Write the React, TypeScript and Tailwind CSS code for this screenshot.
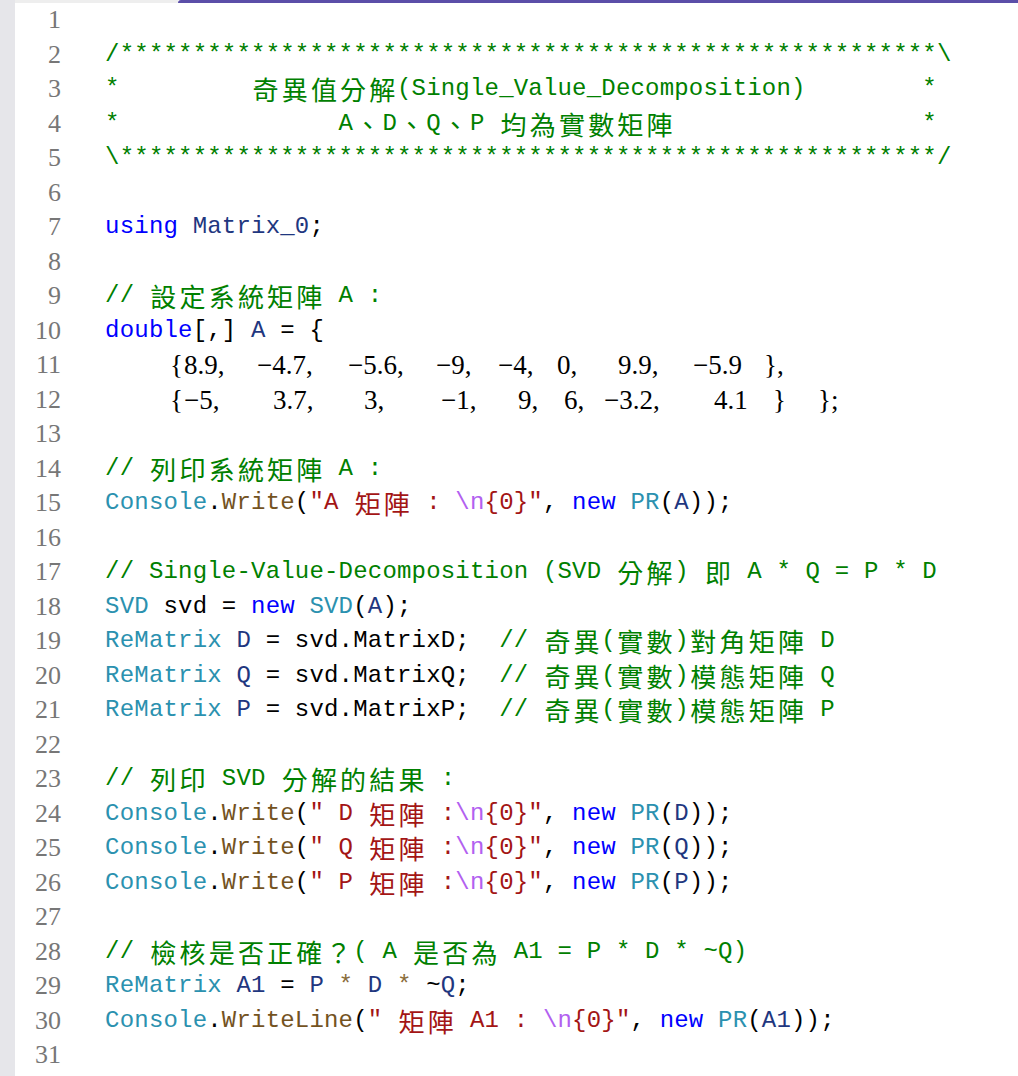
import React from "react";

type Tok = [string, string];
const G = "text-[#008000]";
const K = "text-[#0000ff]";
const T = "text-[#2b91af]";
const M = "text-[#74531f]";
const S = "text-[#a31515]";
const E = "text-[#b260f0]";
const N = "text-[#1f377f]";
const P = "text-[#000000]";
const O = "text-[#8a6d3b]";

const star56 = "*".repeat(56);
const sp = (n: number) => " ".repeat(n);

const lines: (Tok[] | "L11" | "L12")[] = [
  [],
  [[G, "/" + star56 + "\\"]],
  [[G, "*" + sp(9) + "奇異值分解(Single_Value_Decomposition)" + sp(8) + "*"]],
  [[G, "*" + sp(15) + "A、D、Q、P 均為實數矩陣" + sp(17) + "*"]],
  [[G, "\\" + star56 + "/"]],
  [],
  [[K, "using"], [P, " "], [N, "Matrix_0"], [P, ";"]],
  [],
  [[G, "// 設定系統矩陣 A :"]],
  [[K, "double"], [P, "[,] "], [N, "A"], [P, " = {"]],
  "L11",
  "L12",
  [],
  [[G, "// 列印系統矩陣 A :"]],
  [[T, "Console"], [P, "."], [M, "Write"], [P, "("], [S, '"A 矩陣 : '], [E, "\\n"], [S, '{0}"'], [P, ", "], [K, "new"], [P, " "], [T, "PR"], [P, "("], [N, "A"], [P, "));"]],
  [],
  [[G, "// Single-Value-Decomposition (SVD 分解) 即 A * Q = P * D"]],
  [[T, "SVD"], [P, " svd = "], [K, "new"], [P, " "], [T, "SVD"], [P, "("], [N, "A"], [P, ");"]],
  [[T, "ReMatrix"], [P, " "], [N, "D"], [P, " = svd.MatrixD;  "], [G, "// 奇異(實數)對角矩陣 D"]],
  [[T, "ReMatrix"], [P, " "], [N, "Q"], [P, " = svd.MatrixQ;  "], [G, "// 奇異(實數)模態矩陣 Q"]],
  [[T, "ReMatrix"], [P, " "], [N, "P"], [P, " = svd.MatrixP;  "], [G, "// 奇異(實數)模態矩陣 P"]],
  [],
  [[G, "// 列印 SVD 分解的結果 :"]],
  [[T, "Console"], [P, "."], [M, "Write"], [P, "("], [S, '" D 矩陣 :'], [E, "\\n"], [S, '{0}"'], [P, ", "], [K, "new"], [P, " "], [T, "PR"], [P, "("], [N, "D"], [P, "));"]],
  [[T, "Console"], [P, "."], [M, "Write"], [P, "("], [S, '" Q 矩陣 :'], [E, "\\n"], [S, '{0}"'], [P, ", "], [K, "new"], [P, " "], [T, "PR"], [P, "("], [N, "Q"], [P, "));"]],
  [[T, "Console"], [P, "."], [M, "Write"], [P, "("], [S, '" P 矩陣 :'], [E, "\\n"], [S, '{0}"'], [P, ", "], [K, "new"], [P, " "], [T, "PR"], [P, "("], [N, "P"], [P, "));"]],
  [],
  [[G, "// 檢核是否正確？( A 是否為 A1 = P * D * ~Q)"]],
  [[T, "ReMatrix"], [P, " "], [N, "A1"], [P, " = "], [N, "P"], [O, " * "], [N, "D"], [O, " * "], [P, "~"], [N, "Q"], [P, ";"]],
  [[T, "Console"], [P, "."], [M, "WriteLine"], [P, "("], [S, '" 矩陣 A1 : '], [E, "\\n"], [S, '{0}"'], [P, ", "], [K, "new"], [P, " "], [T, "PR"], [P, "("], [N, "A1"], [P, "));"]],
  [],
  [[G, "// 其他測試矩陣"]],
];

const isWide = (c: string) => c.charCodeAt(0) > 0x2e7f;

function Chars({ text, color }: { text: string; color: string }) {
  return (
    <>
      {Array.from(text).map((c, i) =>
        isWide(c) ? (
          <span key={i} className={`inline-block w-[29.2px] text-center text-[26px] font-[Noto_Sans_CJK_TC] ${color}`}>
            {c}
          </span>
        ) : (
          <span key={i} className={`inline-block w-[14.6px] text-center text-[24px] font-[Liberation_Mono] ${color}`}>
            {c === " " ? "\u00a0" : c}
          </span>
        )
      )}
    </>
  );
}

const num = "inline-block text-[27px] font-[Liberation_Serif] text-black";

function L11() {
  return (
    <>
      <span className="inline-block w-[65px]" />
      <span className={`${num} w-[14px]`}>{"{"}</span>
      <span className={`${num} w-[73px]`}>8.9,</span>
      <span className={`${num} w-[91px]`}>−4.7,</span>
      <span className={`${num} w-[88px]`}>−5.6,</span>
      <span className={`${num} w-[62px]`}>−9,</span>
      <span className={`${num} w-[59px]`}>−4,</span>
      <span className={`${num} w-[61px]`}>0,</span>
      <span className={`${num} w-[75px]`}>9.9,</span>
      <span className={`${num} w-[71px]`}>−5.9</span>
      <span className={`${num}`}>{"},"}</span>
    </>
  );
}
function L12() {
  return (
    <>
      <span className="inline-block w-[65px]" />
      <span className={`${num} w-[14px]`}>{"{"}</span>
      <span className={`${num} w-[89px]`}>−5,</span>
      <span className={`${num} w-[91px]`}>3.7,</span>
      <span className={`${num} w-[77px]`}>3,</span>
      <span className={`${num} w-[77px]`}>−1,</span>
      <span className={`${num} w-[46px]`}>9,</span>
      <span className={`${num} w-[40px]`}>6,</span>
      <span className={`${num} w-[110px]`}>−3.2,</span>
      <span className={`${num} w-[59px]`}>4.1</span>
      <span className={`${num} w-[45px]`}>{"}"}</span>
      <span className={`${num}`}>{"};"}</span>
    </>
  );
}

export default function App() {
  return (
    <div className="relative w-[1018px] h-[1076px] overflow-hidden bg-white flex">
      <div className="absolute top-0 left-[15px] w-[163px] h-[3px] bg-[#eeeeee]" />
      <div className="absolute top-0 left-[178px] right-0 h-[3px] bg-[#5b4ea8] rounded-tl-[3px]" />
      <div className="w-[15px] shrink-0 bg-[#e6e6ea]" />
      <div className="flex flex-col pt-[3px]">
        {lines.map((ln, i) => (
          <div key={i} className="flex items-center h-[34.5px] shrink-0 leading-[34.5px] whitespace-pre">
            <span className="w-[47px] text-right pr-[1px] text-[26px] font-[Liberation_Serif] text-[#777777]">{i + 1}</span>
            <span className="w-[43px] shrink-0" />
            {ln === "L11" ? <L11 /> : ln === "L12" ? <L12 /> : ln.map((t, j) => <Chars key={j} text={t[1]} color={t[0]} />)}
          </div>
        ))}
      </div>
    </div>
  );
}
